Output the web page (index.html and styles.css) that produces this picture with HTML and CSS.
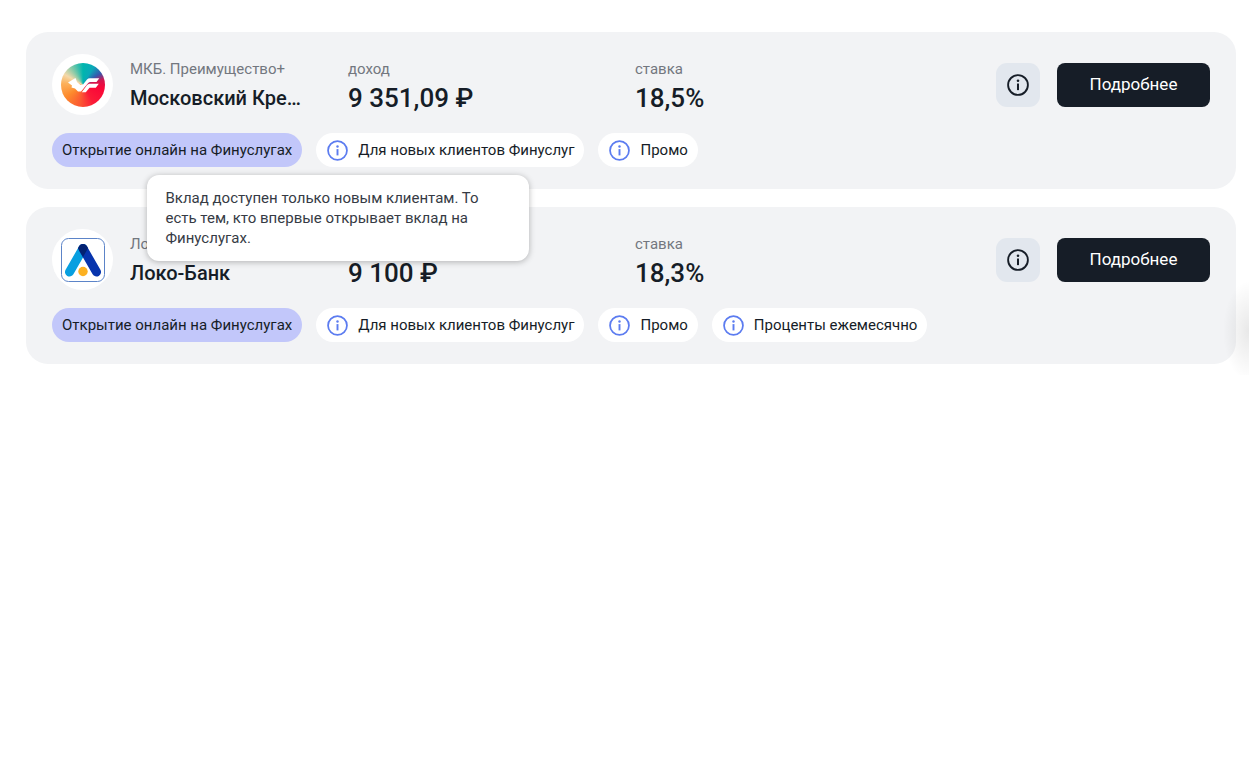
FILE: index.html
```html
<!DOCTYPE html>
<html lang="ru">
<head>
<meta charset="utf-8">
<meta name="viewport" content="width=device-width, initial-scale=1">
<title>Вклады</title>
<link rel="stylesheet" href="styles.css">
</head>
<body>
<svg class="defs" aria-hidden="true">
  <symbol id="info" viewBox="0 0 24 24">
    <circle cx="12" cy="12" r="10.8" fill="none" stroke="currentColor" stroke-width="2"/>
    <circle cx="12" cy="7.4" r="1.4" fill="currentColor"/>
    <path d="M12 10.4V17.6" stroke="currentColor" stroke-width="2.2"/>
  </symbol>
</svg>
<main class="offers">
  <article class="card">
    <div class="summary">
      <div class="logo">
        <div class="mkb">
          <svg viewBox="0 0 44 44" width="44" height="44" role="img" aria-label="МКБ">
            <path fill="#fff" d="M7 19.500L14.500 15 16 19 19.500 22 22 21.500 26 16.500Q27 15.200 29 15.200H38.300L35.500 19H29.500Q28 19 27 20.200L20 28.500H17L14 25.500 10.500 24.500 11 22.500z"/>
            <path fill="#fff" d="M28 20.800H37.800L34.800 24.800H28.500L24.800 29.300H20.800L26 22z"/>
          </svg>
        </div>
      </div>
      <div class="cell name">
        <span class="label">МКБ. Преимущество+</span>
        <h2 class="bank">Московский Кредитный Банк</h2>
      </div>
      <div class="cell">
        <span class="label">доход</span>
        <span class="value">9 351,09 ₽</span>
      </div>
      <div class="cell">
        <span class="label">ставка</span>
        <span class="value">18,5%</span>
      </div>
      <div class="actions">
        <button class="info-button" type="button" aria-label="Информация"><svg class="icon"><use href="#info"/></svg></button>
        <button class="more" type="button">Подробнее</button>
      </div>
    </div>
    <ul class="tags">
      <li class="tag accent">Открытие онлайн на Финуслугах</li>
      <li class="tag with-tip"><svg class="icon"><use href="#info"/></svg>Для новых клиентов Финуслуг
        <div class="tooltip" role="tooltip">Вклад доступен только новым клиентам. То есть тем, кто впервые открывает вклад на Финуслугах.</div>
      </li>
      <li class="tag"><svg class="icon"><use href="#info"/></svg>Промо</li>
    </ul>
  </article>
  <article class="card">
    <div class="summary">
      <div class="logo">
        <svg viewBox="0 0 44 44" width="44" height="44" role="img" aria-label="Локо-Банк">
          <rect x=".5" y=".5" width="43" height="43" rx="7" fill="#fff" stroke="#5c84c8"/>
          <path d="M22 10.500L8.500 34" stroke="#079fe0" stroke-width="9" stroke-linecap="round"/>
          <path d="M22 10.500L35.500 34" stroke="#0734ad" stroke-width="9" stroke-linecap="round"/>
          <path d="M18.100 8.200C20 5.100 24 5.100 25.900 8.200L27 10.300 22 19 17 10.300z" fill="#032272"/>
          <circle cx="22" cy="33.500" r="4.700" fill="#fcb122"/>
        </svg>
      </div>
      <div class="cell name">
        <span class="label">Локо-Вклад</span>
        <h2 class="bank">Локо-Банк</h2>
      </div>
      <div class="cell">
        <span class="label">доход</span>
        <span class="value">9 100 ₽</span>
      </div>
      <div class="cell">
        <span class="label">ставка</span>
        <span class="value">18,3%</span>
      </div>
      <div class="actions">
        <button class="info-button" type="button" aria-label="Информация"><svg class="icon"><use href="#info"/></svg></button>
        <button class="more" type="button">Подробнее</button>
      </div>
    </div>
    <ul class="tags">
      <li class="tag accent">Открытие онлайн на Финуслугах</li>
      <li class="tag"><svg class="icon"><use href="#info"/></svg>Для новых клиентов Финуслуг</li>
      <li class="tag"><svg class="icon"><use href="#info"/></svg>Промо</li>
      <li class="tag"><svg class="icon"><use href="#info"/></svg>Проценты ежемесячно</li>
    </ul>
    <div class="edge-shadow"></div>
  </article>
</main>
</body>
</html>
```
FILE: styles.css
```css
* {
  box-sizing: border-box;
}

body {
  margin: 0;
  background: #fff;
  color: #161d27;
  font-family: Roboto, "Noto Sans", sans-serif;
  font-size: 15px;
  line-height: 20px;
}

.defs {
  position: absolute;
  width: 0;
  height: 0;
}

.offers {
  display: flex;
  flex-direction: column;
  gap: 18px;
  padding: 32px 24px 32px 26px;
}

.card {
  position: relative;
  display: flex;
  flex-direction: column;
  gap: 18px;
  padding: 22px 26px;
  border-radius: 22px;
  background: #f2f3f5;
}

.summary {
  display: grid;
  grid-template-columns: 61px 201px 270fr 344fr auto;
  column-gap: 17px;
  align-items: center;
}

.logo {
  display: flex;
  align-items: center;
  justify-content: center;
  height: 61px;
  border-radius: 50%;
  background: #fff;
}

.mkb {
  height: 44px;
  border-radius: 50%;
  background: conic-gradient(#00b5ae 0deg, #0aa9b8 30deg, #3558ae 56deg, #d4164e 76deg, #fa0738 100deg, #fb1b38 150deg, #fb5a32 190deg, #fd8a2c 235deg, #fcb15c 275deg, #f4d9aa 300deg, #7fc9a8 328deg, #00b5ae 360deg);
}

.cell {
  display: flex;
  flex-direction: column;
  gap: 4px;
  min-width: 0;
  padding-top: 2px;
}

.name {
  padding-right: 24px;
}

.label {
  color: #73777f;
}

.bank {
  margin: 0;
  overflow: hidden;
  font-size: 20px;
  font-weight: 500;
  line-height: 30px;
  text-overflow: ellipsis;
  white-space: nowrap;
}

.value {
  font-size: 26px;
  font-weight: 500;
  line-height: 30px;
}

.actions {
  display: flex;
  gap: 17px;
}

button {
  display: flex;
  align-items: center;
  justify-content: center;
  height: 44px;
  padding: 0;
  border: 0;
  font: inherit;
  color: inherit;
  cursor: pointer;
}

.info-button {
  width: 44px;
  border-radius: 11px;
  background: #e2e7ee;
}

.info-button .icon {
  width: 22px;
  height: 22px;
}

.more {
  width: 153px;
  padding-bottom: 2px;
  border-radius: 8px;
  background: #161d27;
  color: #fff;
  font-size: 17px;
}

.tags {
  display: flex;
  flex-wrap: wrap;
  gap: 14px;
  margin: 0;
  padding: 0;
  list-style: none;
}

.tag {
  display: flex;
  align-items: center;
  gap: 10px;
  height: 34px;
  padding: 0 10px 0 11px;
  border-radius: 17px;
  background: #fff;
}

.tag .icon {
  width: 21px;
  height: 21px;
  color: #5c7cf0;
}

.accent {
  padding: 0 10px;
  background: #c2c7fa;
}

.with-tip {
  position: relative;
}

.tooltip {
  position: absolute;
  z-index: 2;
  top: 42px;
  right: 55px;
  width: 382px;
  padding: 13px 18px;
  border-radius: 12px;
  background: #fff;
  box-shadow: 0 1px 6px rgba(0, 0, 0, 0.28);
  color: #363b45;
}

.icon {
  overflow: visible;
}

.edge-shadow {
  position: absolute;
  top: 70px;
  right: -13px;
  width: 30px;
  height: 98px;
  background: radial-gradient(ellipse 26px 50px at 100% 55%, rgba(0, 0, 0, 0.09), rgba(0, 0, 0, 0));
  pointer-events: none;
}
```
